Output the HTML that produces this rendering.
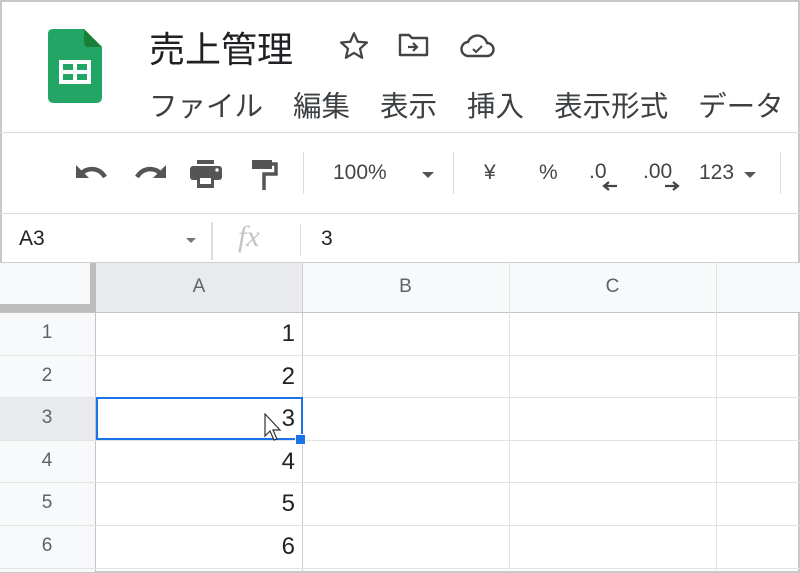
<!DOCTYPE html>
<html><head><meta charset="utf-8"><style>
*{margin:0;padding:0;box-sizing:border-box}
body{width:800px;height:573px;background:#fff;position:relative;overflow:hidden;font-family:"Liberation Sans","Noto Sans CJK JP",sans-serif;color:#3c4043}
.a{position:absolute}
.h{position:absolute;height:1px;background:#e2e3e3}
.v{position:absolute;width:1px;background:#e2e3e3}
.t{position:absolute;white-space:nowrap}
.rn{position:absolute;left:0;width:94px;text-align:center;font-size:19px;color:#5f6368}
.cv{position:absolute;left:96px;width:199px;text-align:right;font-size:24px;color:#222}
</style></head><body>
<div class="a" style="left:0;top:0;width:800px;height:573px;border:2px solid #c8c8c8"></div>
<svg class="a" style="left:48px;top:29px" width="54" height="74" viewBox="0 0 54 74">
<path d="M5 0H36L54 18V68Q54 74 48 74H6Q0 74 0 68V5Q0 0 5 0Z" fill="#23a566"/>
<path d="M36 0V13Q36 18 41 18H54Z" fill="#188038"/>
<rect x="11" y="31" width="32" height="24" fill="#fff"/>
<rect x="15" y="35" width="10" height="6" fill="#23a566"/><rect x="29" y="35" width="10" height="6" fill="#23a566"/>
<rect x="15" y="45" width="10" height="6" fill="#23a566"/><rect x="29" y="45" width="10" height="6" fill="#23a566"/>
</svg>
<div class="t" style="left:149px;top:21px;font-size:36px;color:#202124">売上管理</div>
<svg class="a" style="left:338px;top:30px" width="32" height="32" viewBox="0 0 24 24"><path d="M12 2.5l2.8 6.3 6.9.6-5.2 4.6 1.6 6.8L12 17.2l-6.1 3.6 1.6-6.8L2.3 9.4l6.9-.6z" fill="none" stroke="#444" stroke-width="1.7" stroke-linejoin="round"/></svg>
<svg class="a" style="left:398px;top:32px" width="32" height="26" viewBox="0 0 32 26"><path d="M2 3h9l3 3h15v17H2z" fill="none" stroke="#444" stroke-width="2.4" stroke-linejoin="round"/><path d="M10 15h9M15 11l4 4-4 4" fill="none" stroke="#444" stroke-width="2.2"/></svg>
<svg class="a" style="left:460px;top:33px" width="36" height="26" viewBox="0 0 36 26"><path d="M9 23a7 7 0 0 1-1-14 10 10 0 0 1 19 1 6.5 6.5 0 0 1 0 13z" fill="none" stroke="#444" stroke-width="2.4"/><path d="M13 16l3 3 6-6" fill="none" stroke="#444" stroke-width="2"/></svg>
<div class="t" style="left:149px;top:84px;font-size:28.5px;color:#3c4043">ファイル<span style="margin-left:30px">編集</span><span style="margin-left:30px">表示</span><span style="margin-left:30px">挿入</span><span style="margin-left:30px">表示形式</span><span style="margin-left:30px">データ</span></div>
<div class="h" style="left:0;top:132px;width:800px;background:#dadce0"></div>
<svg class="a" style="left:72px;top:160px" width="40" height="26" viewBox="0 0 40 26"><path d="M9 14C15 7 27 7 33 17" fill="none" stroke="#555" stroke-width="4.5"/><path d="M4 5v13h13z" fill="#555"/></svg>
<svg class="a" style="left:130px;top:160px" width="40" height="26" viewBox="0 0 40 26"><path d="M31 14C25 7 13 7 7 17" fill="none" stroke="#555" stroke-width="4.5"/><path d="M36 5v13H23z" fill="#555"/></svg>
<svg class="a" style="left:188px;top:158px" width="36" height="32" viewBox="0 0 36 32"><rect x="9" y="2" width="17" height="4" fill="#555"/><rect x="2" y="8" width="32" height="14" rx="3" fill="#555"/><rect x="9" y="17" width="17" height="13" fill="#555"/><rect x="12" y="20" width="11" height="6" fill="#fff"/><circle cx="29" cy="12" r="1.7" fill="#fff"/></svg>
<svg class="a" style="left:250px;top:158px" width="30" height="34" viewBox="0 0 30 34"><rect x="2" y="2" width="20" height="9" fill="#555"/><path d="M22 6h4v10h-12v16" fill="none" stroke="#555" stroke-width="3.5"/></svg>
<div class="v" style="left:303px;top:152px;height:42px;background:#dadce0"></div>
<div class="t" style="left:333px;top:161px;font-size:21px;color:#444">100%</div>
<div class="a" style="left:422px;top:172px;border-left:6px solid transparent;border-right:6px solid transparent;border-top:6px solid #555"></div>
<div class="v" style="left:453px;top:152px;height:42px;background:#dadce0"></div>
<div class="t" style="left:484px;top:161px;font-size:21px;color:#444">¥</div>
<div class="t" style="left:539px;top:161px;font-size:21px;color:#444">%</div>
<div class="t" style="left:589px;top:160px;font-size:21px;color:#444">.0</div>
<svg class="a" style="left:602px;top:181px" width="16" height="10"><path d="M15 5H4M7 1L2 5l5 4" fill="none" stroke="#444" stroke-width="2.2"/></svg>
<div class="t" style="left:643px;top:160px;font-size:21px;color:#444">.00</div>
<svg class="a" style="left:664px;top:181px" width="16" height="10"><path d="M1 5h11M9 1l5 4-5 4" fill="none" stroke="#444" stroke-width="2.2"/></svg>
<div class="t" style="left:699px;top:161px;font-size:21px;color:#444">123</div>
<div class="a" style="left:744px;top:172px;border-left:6px solid transparent;border-right:6px solid transparent;border-top:6px solid #555"></div>
<div class="v" style="left:780px;top:152px;height:42px;background:#dadce0"></div>
<div class="h" style="left:0;top:213px;width:800px;background:#dadce0"></div>
<div class="t" style="left:19px;top:227px;font-size:21px;color:#222">A3</div>
<div class="a" style="left:186px;top:238px;border-left:5px solid transparent;border-right:5px solid transparent;border-top:5px solid #777"></div>
<div class="v" style="left:211px;top:222px;height:38px;width:2px;background:#ddd"></div>
<div class="t" style="left:238px;top:220px;font-size:30px;font-style:italic;font-family:'Liberation Serif',serif;color:#c4c4c4">fx</div>
<div class="v" style="left:300px;top:224px;height:32px;background:#ddd"></div>
<div class="t" style="left:321px;top:227px;font-size:21px;color:#222">3</div>
<div class="h" style="left:0;top:262px;width:800px;background:#d0d0d0"></div>
<div class="a" style="left:0;top:263px;width:800px;height:49px;background:#f8f9fa"></div>
<div class="a" style="left:96px;top:263px;width:206px;height:49px;background:#e8eaed"></div>
<div class="a" style="left:90px;top:263px;width:6px;height:49px;background:#bdbdbd"></div>
<div class="a" style="left:0;top:304px;width:96px;height:8px;background:#bdbdbd"></div>
<div class="a" style="left:0;top:312px;width:95px;height:260px;background:#f8f9fa"></div>
<div class="a" style="left:0;top:397px;width:95px;height:43px;background:#e8eaed"></div>
<div class="t" style="left:96px;top:276px;width:206px;text-align:center;font-size:19px;color:#5f6368">A</div>
<div class="t" style="left:302px;top:276px;width:207px;text-align:center;font-size:19px;color:#5f6368">B</div>
<div class="t" style="left:509px;top:276px;width:207px;text-align:center;font-size:19px;color:#5f6368">C</div>
<div class="h" style="left:0;top:312px;width:800px;background:#c4c4c4"></div>
<div class="v" style="left:95px;top:312px;height:260px;background:#c4c4c4"></div>
<div class="v" style="left:302px;top:263px;height:309px;background:#ccc"></div>
<div class="v" style="left:509px;top:263px;height:309px"></div>
<div class="v" style="left:716px;top:263px;height:309px"></div>
<div class="h" style="left:0;top:355px;width:800px"></div>
<div class="h" style="left:0;top:397px;width:800px"></div>
<div class="h" style="left:0;top:440px;width:800px"></div>
<div class="h" style="left:0;top:482px;width:800px"></div>
<div class="h" style="left:0;top:525px;width:800px"></div>
<div class="h" style="left:0;top:568px;width:800px"></div>
<div class="rn" style="top:322px">1</div><div class="rn" style="top:365px">2</div><div class="rn" style="top:407px">3</div>
<div class="rn" style="top:450px">4</div><div class="rn" style="top:492px">5</div><div class="rn" style="top:535px">6</div>
<div class="cv" style="top:320px">1</div><div class="cv" style="top:363px">2</div><div class="cv" style="top:405px">3</div>
<div class="cv" style="top:448px">4</div><div class="cv" style="top:490px">5</div><div class="cv" style="top:533px">6</div>
<div class="a" style="left:96px;top:397px;width:207px;height:43px;border:2px solid #1a73e8"></div>
<div class="a" style="left:295px;top:434px;width:11px;height:11px;background:#1a73e8;border:1px solid #fff"></div>
<svg class="a" style="left:264px;top:413px" width="20" height="30" viewBox="0 0 20 30"><path d="M1 1v22l5-5 4 9 3-1-4-9h7z" fill="#fff" stroke="#333" stroke-width="1.2"/></svg>
</body></html>
